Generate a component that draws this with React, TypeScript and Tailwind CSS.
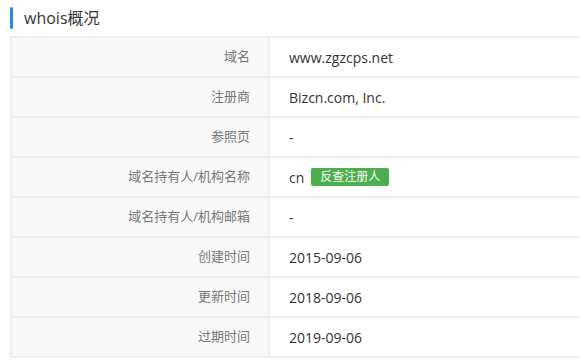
import React from "react";

type Row = {
    label: string;
    value: string;
    reverse?: boolean;
};

const rows: Row[] = [
    { label: "域名", value: "www.zgzcps.net" },
    { label: "注册商", value: "Bizcn.com, Inc." },
    { label: "参照页", value: "-" },
    { label: "域名持有人/机构名称", value: "cn", reverse: true },
    { label: "域名持有人/机构邮箱", value: "-" },
    { label: "创建时间", value: "2015-09-06" },
    { label: "更新时间", value: "2018-09-06" },
    { label: "过期时间", value: "2019-09-06" },
];

const App = () => {
    return (
        <div
            className="w-[580px] h-[360px] overflow-hidden bg-white"
            style={{ fontFamily: '"Open Sans", "Noto Sans CJK SC", sans-serif' }}
        >
            <div className="flex items-center h-[34px] pl-[10px] pt-[1px]">
                <span className="w-[3px] h-[22px] rounded-full bg-[#2a8ce0]" />
                <h2 className="ml-[11px] text-[16px] text-[#333] leading-none">whois概况</h2>
            </div>

            <div className="ml-[10px] mr-[2px] mt-[2px] border-t-2 border-l-2 border-[#eeeeee]">
                {rows.map((row) => (
                    <div key={row.label} className="flex h-[40px] border-b-2 border-[#eeeeee]">
                        <div className="w-[258px] shrink-0 flex items-center justify-end pr-[18px] bg-[#f8f8f8] border-r-2 border-[#eeeeee] text-[13px] text-[#777]">
                            {row.label}
                        </div>
                        <div className="flex-1 flex items-center pl-[19px] text-[14px] text-[#333]">
                            {row.value}
                            {row.reverse && (
                                <span className="ml-[7px] h-[18px] px-[9px] flex items-center rounded-[2px] bg-[#4cae4c] text-white text-[12px] leading-none">
                                    反查注册人
                                </span>
                            )}
                        </div>
                    </div>
                ))}
            </div>
        </div>
    );
};

export default App;
